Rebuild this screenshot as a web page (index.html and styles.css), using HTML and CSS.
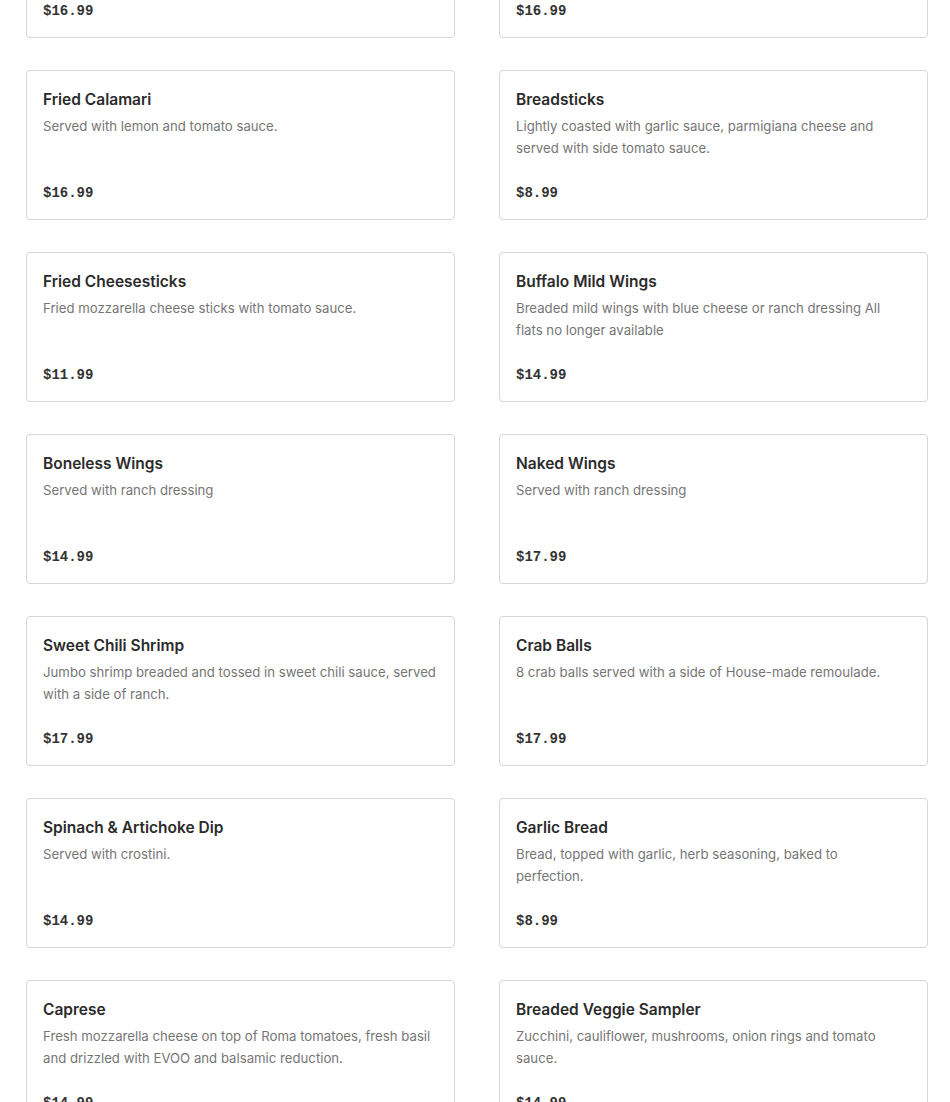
FILE: index.html
```html
<!DOCTYPE html>
<html lang="en">
<head>
<meta charset="utf-8">
<title>Menu</title>
<link rel="stylesheet" href="styles.css">
</head>
<body>
<main class="menu">
  <div class="card"><div class="price">$16.99</div></div>
  <div class="card"><div class="price">$16.99</div></div>

  <div class="card"><h3 class="name">Fried Calamari</h3><p class="desc">Served with lemon and tomato sauce.</p><div class="price">$16.99</div></div>
  <div class="card"><h3 class="name">Breadsticks</h3><p class="desc">Lightly coasted with garlic sauce, parmigiana cheese and served with side tomato sauce.</p><div class="price">$8.99</div></div>

  <div class="card"><h3 class="name">Fried Cheesesticks</h3><p class="desc">Fried mozzarella cheese sticks with tomato sauce.</p><div class="price">$11.99</div></div>
  <div class="card"><h3 class="name">Buffalo Mild Wings</h3><p class="desc">Breaded mild wings with blue cheese or ranch dressing All flats no longer available</p><div class="price">$14.99</div></div>

  <div class="card"><h3 class="name">Boneless Wings</h3><p class="desc">Served with ranch dressing</p><div class="price">$14.99</div></div>
  <div class="card"><h3 class="name">Naked Wings</h3><p class="desc">Served with ranch dressing</p><div class="price">$17.99</div></div>

  <div class="card"><h3 class="name">Sweet Chili Shrimp</h3><p class="desc">Jumbo shrimp breaded and tossed in sweet chili sauce, served with a side of ranch.</p><div class="price">$17.99</div></div>
  <div class="card"><h3 class="name">Crab Balls</h3><p class="desc">8 crab balls served with a side of House-made remoulade.</p><div class="price">$17.99</div></div>

  <div class="card"><h3 class="name">Spinach &amp; Artichoke Dip</h3><p class="desc">Served with crostini.</p><div class="price">$14.99</div></div>
  <div class="card"><h3 class="name">Garlic Bread</h3><p class="desc">Bread, topped with garlic, herb seasoning, baked to perfection.</p><div class="price">$8.99</div></div>

  <div class="card"><h3 class="name">Caprese</h3><p class="desc">Fresh mozzarella cheese on top of Roma tomatoes, fresh basil and drizzled with EVOO and balsamic reduction.</p><div class="price">$14.99</div></div>
  <div class="card"><h3 class="name">Breaded Veggie Sampler</h3><p class="desc">Zucchini, cauliflower, mushrooms, onion rings and tomato sauce.</p><div class="price">$14.99</div></div>
</main>
</body>
</html>
```

FILE: styles.css
```css
html, body {
  margin: 0;
  padding: 0;
  background: #ffffff;
}
body {
  font-family: Inter, "Liberation Sans", sans-serif;
  color: #2d2d2d;
  overflow: hidden;
}
.menu {
  display: grid;
  grid-template-columns: 429px 429px;
  column-gap: 44px;
  row-gap: 32px;
  padding: 0 22px 0 26px;
  margin-top: -112px;
}
.card {
  box-sizing: border-box;
  height: 150px;
  border: 1px solid #d6d6d6;
  border-radius: 4px;
  padding: 17px 18px 15px 16px;
  display: flex;
  flex-direction: column;
}
.name {
  margin: 0;
  font-size: 15.5px;
  line-height: 24px;
  font-weight: 600;
  color: #2b2b2b;
}
.desc {
  margin: 3px 0 0 0;
  font-size: 13.2px;
  line-height: 22px;
  color: #767676;
}
.price {
  margin-top: auto;
  font-family: "Liberation Mono", "DejaVu Sans Mono", monospace;
  font-weight: 700;
  font-size: 14px;
  line-height: 22px;
  color: #333333;
}
```
